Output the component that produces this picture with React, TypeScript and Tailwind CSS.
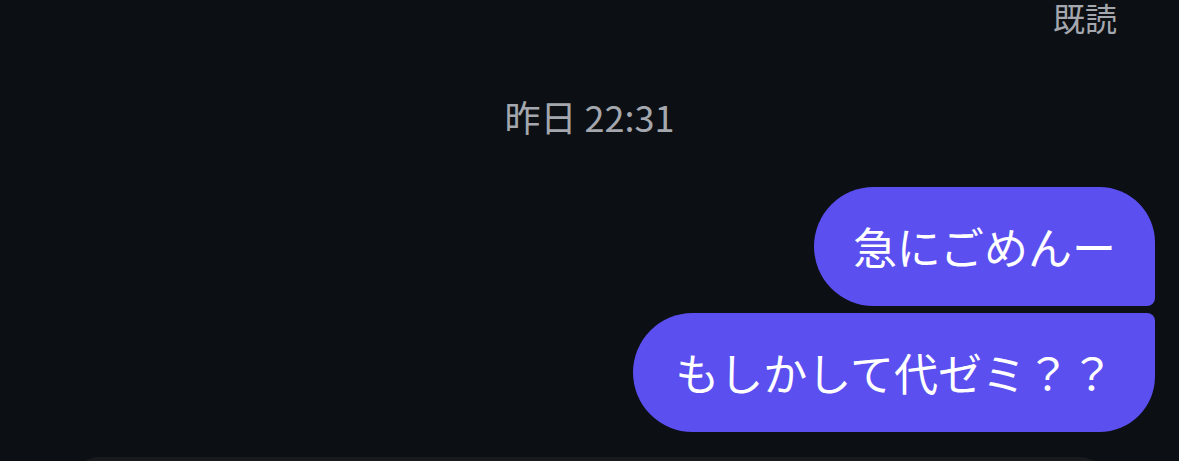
const font = { fontFamily: '"Noto Sans CJK JP", "Noto Sans", sans-serif' };

export default function App() {
  return (
    <div
      className="flex h-[461px] w-[1179px] flex-col overflow-hidden bg-[#0c0f14]"
      style={font}
    >
      <div className="flex justify-end pr-[62px]">
        <span className="text-[32px] leading-[34px] text-[#a4a7ae]">既読</span>
      </div>

      <div className="mt-[60px] flex justify-center">
        <span className="text-[36px] leading-[44px] text-[#a4a7ae]">昨日 22:31</span>
      </div>

      <div className="mt-[49px] flex flex-col items-end gap-[7px] pr-[24px]">
        <div className="rounded-l-[60px] rounded-tr-[56px] rounded-br-[8px] bg-[#5b4ff0] py-[32px] px-[39px] text-[44px] leading-[55px] text-white">
          急にごめんー
        </div>
        <div className="rounded-l-[60px] rounded-tr-[8px] rounded-br-[56px] bg-[#5b4ff0] py-[32px] pl-[42px] pr-[41px] text-[44px] leading-[55px] text-white">
          もしかして代ゼミ？？
        </div>
      </div>

      <div className="mx-[70px] mt-[25px] h-[60px] shrink-0 rounded-[40px] bg-[#181a1e]" />
    </div>
  );
}
